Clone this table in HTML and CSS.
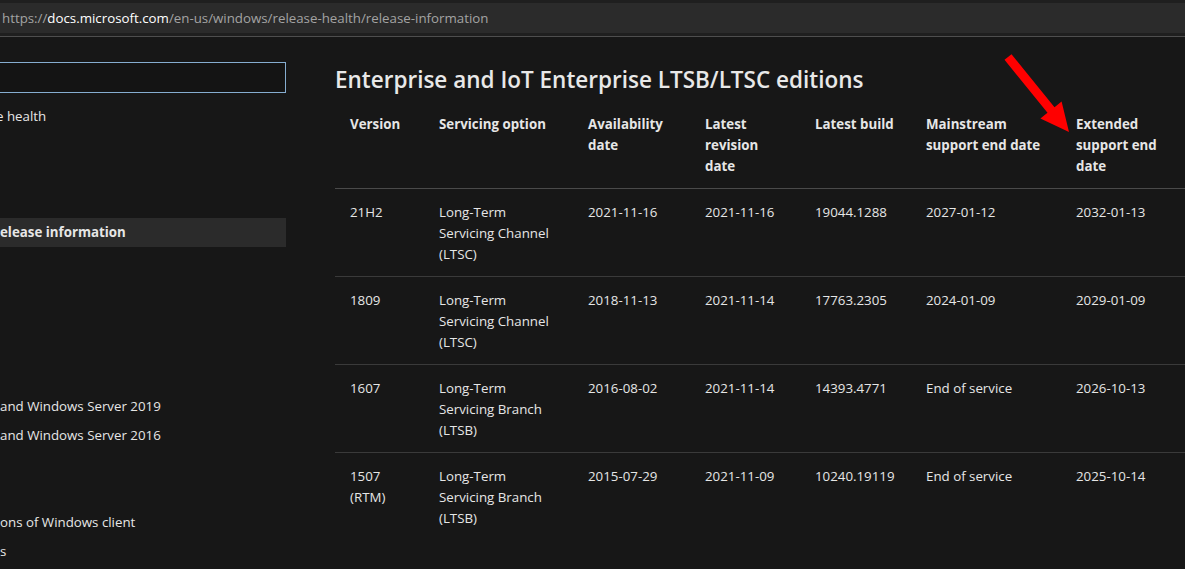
FILE: index.html
```html
<!DOCTYPE html>
<html lang="en">
<head>
<meta charset="utf-8">
<title>Windows release health</title>
<link rel="stylesheet" href="styles.css">
</head>
<body>
<div class="chrome">
  <div class="urlbar"><span class="dim">https://</span><span class="host">docs.microsoft.com</span><span class="dim">/en-us/windows/release-health/release-information</span></div>
</div>
<div class="page">
  <nav class="sidebar">
    <div class="search"></div>
    <ul class="toc">
      <li class="clip">e health</li>
      <li></li>
      <li></li>
      <li></li>
      <li class="active">elease information</li>
      <li></li>
      <li></li>
      <li></li>
      <li></li>
      <li></li>
      <li>and Windows Server 2019</li>
      <li>and Windows Server 2016</li>
      <li></li>
      <li></li>
      <li>ons of Windows client</li>
      <li>s</li>
    </ul>
  </nav>
  <main class="content">
    <h2 class="title">Enterprise and IoT Enterprise LTSB/LTSC editions</h2>
    <table class="rel">
      <colgroup>
        <col class="c1"><col class="c2"><col class="c3"><col class="c4"><col class="c5"><col class="c6"><col class="c7">
      </colgroup>
      <thead>
        <tr><th>Version</th><th>Servicing option</th><th>Availability date</th><th>Latest revision date</th><th>Latest build</th><th>Mainstream support end date</th><th>Extended support end date</th></tr>
      </thead>
      <tbody>
        <tr><td>21H2</td><td>Long-Term Servicing Channel (LTSC)</td><td>2021-11-16</td><td>2021-11-16</td><td>19044.1288</td><td>2027-01-12</td><td>2032-01-13</td></tr>
        <tr><td>1809</td><td>Long-Term Servicing Channel (LTSC)</td><td>2018-11-13</td><td>2021-11-14</td><td>17763.2305</td><td>2024-01-09</td><td>2029-01-09</td></tr>
        <tr><td>1607</td><td>Long-Term Servicing Branch (LTSB)</td><td>2016-08-02</td><td>2021-11-14</td><td>14393.4771</td><td>End of service</td><td>2026-10-13</td></tr>
        <tr><td>1507 (RTM)</td><td>Long-Term Servicing Branch (LTSB)</td><td>2015-07-29</td><td>2021-11-09</td><td>10240.19119</td><td>End of service</td><td>2025-10-14</td></tr>
      </tbody>
    </table>
  </main>
</div>
<svg class="arrow" width="80" height="90" viewBox="0 0 80 90" aria-hidden="true">
  <polygon fill="#ff0000" points="4.5,9.8 11.5,4.2 54.5,57.2 61.6,51.4 69,82 40.4,68.6 47.5,62.8"/>
</svg>
</body>
</html>
```

FILE: styles.css
```css
html, body {
  margin: 0;
  padding: 0;
}
body {
  background: #171717;
  color: #e6e6e6;
  font-family: "Open Sans", "Noto Sans", sans-serif;
  overflow: hidden;
  width: 1185px;
  height: 569px;
  position: relative;
}
.chrome {
  background: #1f1f1f;
  padding: 3px 0 3px 0;
  border-bottom: 1px solid #4e4e4e;
  background-clip: padding-box;
}
.urlbar {
  height: 30px;
  background: #2b2b2b;
  display: flex;
  align-items: center;
  padding-left: 2px;
  font-size: 13.3px;
  white-space: nowrap;
}
.urlbar .dim { color: #a3a3a3; }
.urlbar .host { color: #ffffff; }

.page {
  display: flex;
  gap: 48px;
}
.sidebar {
  width: 287px;
  flex: none;
  overflow: hidden;
  padding-top: 25px;
}
.search {
  height: 29px;
  border: 1px solid #86add0;
  border-left: none;
  background: #141414;
  margin-right: 1px;
}
.toc {
  list-style: none;
  margin: 9px 0 0 0;
  padding: 0;
  font-size: 13.3px;
}
.toc li {
  height: 29px;
  line-height: 29px;
  white-space: nowrap;
  color: #e6e6e6;
}
.toc li.clip { margin-left: -4px; }
.toc li.active {
  background: #2b2b2b;
  font-weight: 700;
  margin-right: 1px;
}

.content {
  flex: none;
  padding-top: 27px;
}
.title {
  margin: 0 0 6px 0;
  font-size: 22.5px;
  font-weight: 600;
  line-height: 32px;
  color: #e8e8e8;
}
.rel {
  border-collapse: collapse;
  table-layout: fixed;
  width: 851px;
  font-size: 13.3px;
  line-height: 21px;
}
.rel col.c1 { width: 89px; }
.rel col.c2 { width: 149px; }
.rel col.c3 { width: 117px; }
.rel col.c4 { width: 110px; }
.rel col.c5 { width: 111px; }
.rel col.c6 { width: 150px; }
.rel col.c7 { width: 125px; }
.rel th, .rel td {
  text-align: left;
  vertical-align: top;
  padding: 12px 15px 11px 15px;
}
.rel th {
  font-weight: 700;
  color: #e6e6e6;
  border-bottom: 1px solid #4a4a4a;
}
.rel td {
  border-bottom: 1px solid #3a3a3a;
  padding-top: 13px;
}
.rel tbody tr:last-child td {
  border-bottom: none;
}
.arrow {
  position: absolute;
  left: 1000px;
  top: 50px;
}
```
